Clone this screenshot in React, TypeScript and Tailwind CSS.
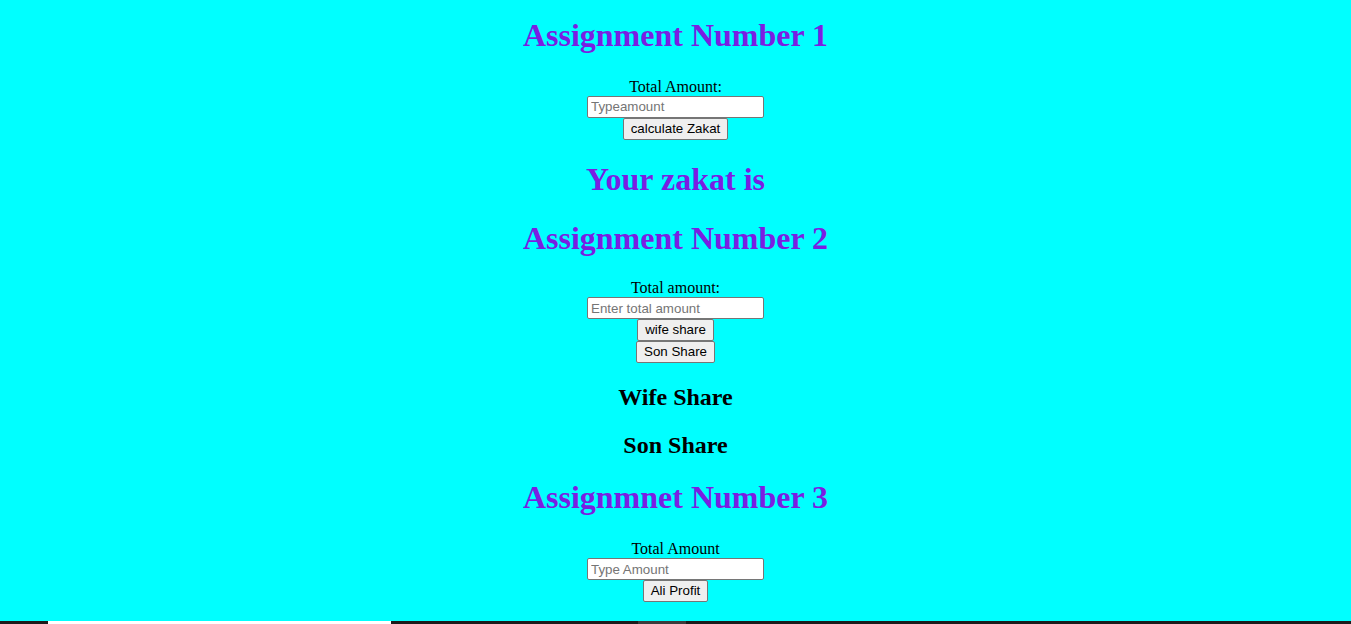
const serif = "font-['Liberation_Serif','Times_New_Roman',serif]";
const sans = "font-['Liberation_Sans',Arial,sans-serif]";

function Title({ children, className }: { children: React.ReactNode; className: string }) {
  return <h1 className={`text-[32px] font-bold leading-[36.8px] text-[#7a1ee2] ${className}`}>{children}</h1>;
}

function Sub({ children, className }: { children: React.ReactNode; className: string }) {
  return <h2 className={`text-[24px] font-bold leading-[27.6px] text-black ${className}`}>{children}</h2>;
}

function Field({ label, placeholder }: { label: string; placeholder: string }) {
  return (
    <>
      <div className="h-[18px] text-[16px] leading-[18px]">{label}</div>
      <input
        type="text"
        placeholder={placeholder}
        className={`${sans} mx-auto block h-[22px] w-[177px] rounded-[2px] border border-[#767676] bg-white px-[3px] text-[13.33px] text-black placeholder:text-[#757575] outline-none`}
      />
    </>
  );
}

function Btn({ children }: { children: React.ReactNode }) {
  return (
    <button
      className={`${sans} mx-auto block h-[22px] rounded-[2px] border border-[#767676] bg-[#efefef] px-[7px] text-[13.33px] leading-[18px] text-black`}
    >
      {children}
    </button>
  );
}

export default function App() {
  return (
    <div className={`${serif} flow-root min-h-screen bg-[#00ffff] text-center text-black`}>
      <Title className="mt-[17px] mb-[24px]">Assignment Number 1</Title>
      <Field label="Total Amount:" placeholder="Typeamount" />
      <Btn>calculate Zakat</Btn>
      <Title className="mt-[21px] mb-[22px]">Your zakat is</Title>

      <Title className="mb-[23px]">Assignment Number 2</Title>
      <Field label="Total amount:" placeholder="Enter total amount" />
      <Btn>wife share</Btn>
      <Btn>Son Share</Btn>
      <Sub className="mt-[21px] mb-[20px]">Wife Share</Sub>
      <Sub className="mb-[19px]">Son Share</Sub>

      <Title className="mb-[25px]">Assignmnet Number 3</Title>
      <Field label="Total Amount" placeholder="Type Amount" />
      <Btn>Ali Profit</Btn>
      <div className="h-[40px]" />

      <div className="fixed inset-x-0 bottom-0 flex h-[3px] bg-[#1c1c1c]">
        <div className="ml-[48px] w-[343px] bg-white" />
        <div className="ml-[247px] w-[48px] bg-[#3c3c3c]" />
      </div>
    </div>
  );
}
